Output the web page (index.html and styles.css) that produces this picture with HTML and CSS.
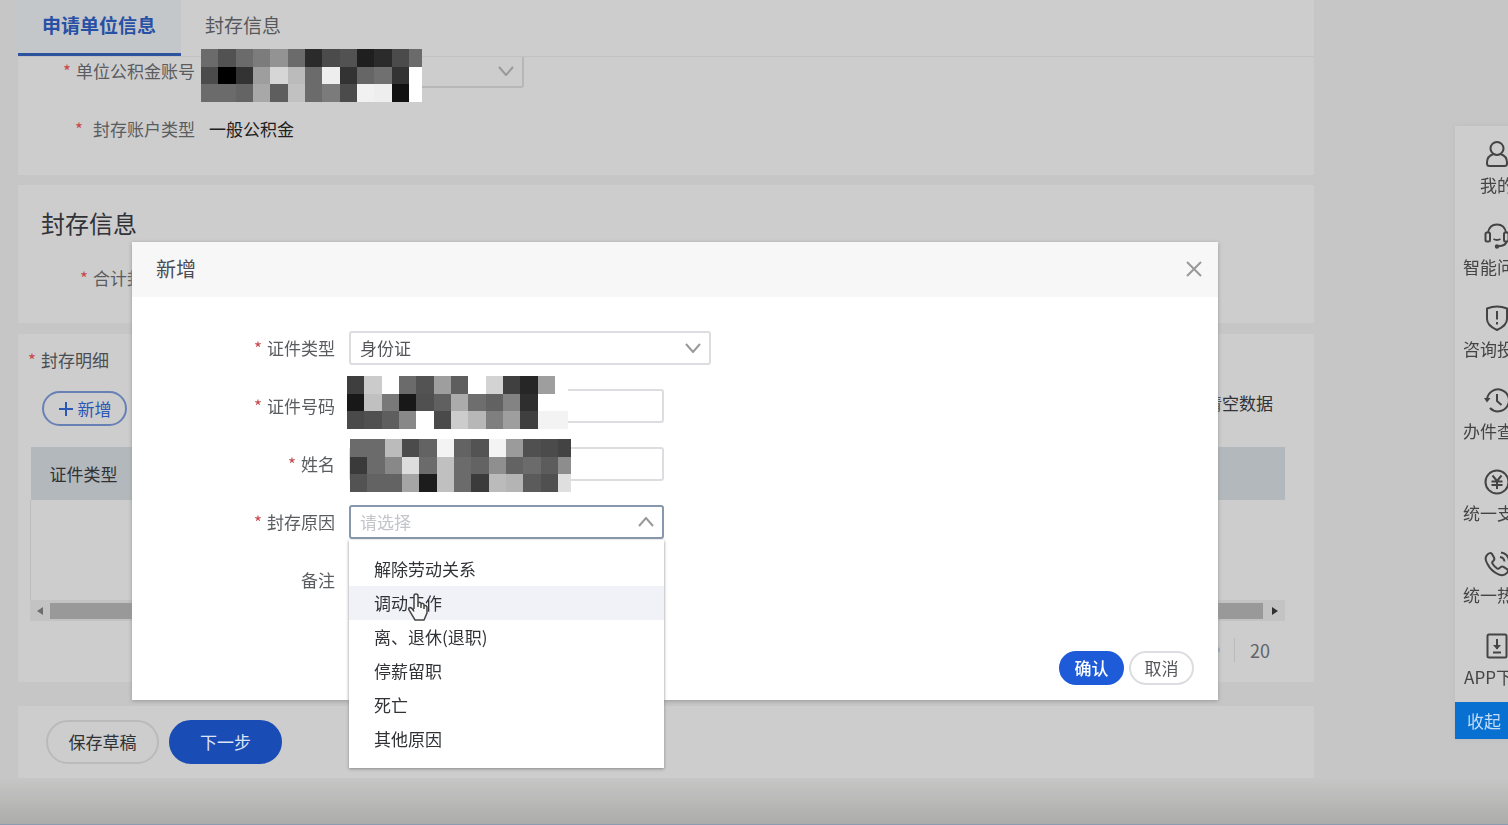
FILE: index.html
```html
<!DOCTYPE html>
<html lang="zh-CN">
<head>
<meta charset="utf-8">
<title>封存信息</title>
<link rel="stylesheet" href="styles.css">
</head>
<body>
<main class="page">
  <nav class="tabs">
    <a class="tab active" href="#unit">申请单位信息</a>
    <a class="tab" href="#seal">封存信息</a>
  </nav>
  <section class="panel unit" id="unit">
    <div class="row">
      <label class="label" for="account"><span class="star">*</span>单位公积金账号</label>
      <div class="field account">
        <select id="account" class="control"><option></option></select>
        <svg class="chevron" viewBox="0 0 16 10"><path d="M1 1l7 8 7-8"/></svg>
        <div class="mosaic" data-rows="6b526b7c936b2b4b521f2b4b6b 4b00339ed6bb6bee33667033ff 6b6b64a85ec16b7b4bf1ee12ff"></div>
      </div>
    </div>
    <div class="row">
      <span class="label wide"><span class="star">*</span>封存账户类型</span>
      <span class="value">一般公积金</span>
    </div>
  </section>
  <section class="panel seal" id="seal">
    <h2 class="heading">封存信息</h2>
    <div class="row"><span class="label"><span class="star">*</span>合计封存人数</span></div>
  </section>
  <section class="panel detail">
    <div class="detail-title"><span class="star">*</span>封存明细</div>
    <div class="toolbar">
      <button class="add" type="button"><svg viewBox="0 0 16 16"><path d="M8 1v14M1 8h14"/></svg>新增</button>
      <button class="clear" type="button">清空数据</button>
    </div>
    <table class="table">
      <thead><tr><th>证件类型</th></tr></thead>
      <tbody><tr><td></td></tr></tbody>
    </table>
    <div class="scrollbar">
      <svg viewBox="0 0 6 8"><path d="M6 0v8L0 4z"/></svg>
      <div class="thumb"></div>
      <svg class="dark" viewBox="0 0 6 8"><path d="M0 0v8l6-4z"/></svg>
    </div>
    <div class="pager"><span class="page-dot"></span><span class="page-size">20</span></div>
  </section>
  <footer class="panel actions">
    <button class="btn-large" type="button">保存草稿</button>
    <button class="btn-large next" type="button">下一步</button>
  </footer>
</main>
<div class="fade"></div>

<aside class="side">
  <a class="side-item" href="#my"><svg viewBox="0 0 26 26"><path d="M9.500 13C7 11 6.500 9.500 6.500 7.500a6.500 6.500 0 0 1 13 0c0 2-.5 3.500-3 5.500M9.500 13C5 14.500 3 17.500 3 21.500v1q0 2.500 2.500 2.500h15q2.500 0 2.500-2.500v-1c0-4-2-7-6.500-8.500M9.500 13q3.500 1.800 7 0"/></svg>我的</a>
  <a class="side-item" href="#ask"><svg viewBox="0 0 26 26"><rect x="1.500" y="9.500" width="4.500" height="9" rx="1.500"/><rect x="20" y="9.500" width="4.500" height="9" rx="1.500"/><path d="M4 9.500C5 4 8.500 1.500 13 1.500S21 4 22 9.500M22.500 18.500c-.5 3-4 4.500-8 4.800M9.500 16q3.500 2 7 0"/><circle cx="13" cy="23.500" r="2.200" class="solid"/></svg>智能问答</a>
  <a class="side-item" href="#complain"><svg viewBox="0 0 26 26"><path d="M3 3.500Q13-.5 23 3.500V14q0 6.500-10 11Q3 20.500 3 14z"/><path class="bold" d="M13 6v8.500M13 17v2.500"/></svg>咨询投诉</a>
  <a class="side-item" href="#progress"><svg viewBox="0 0 26 26"><path d="M3 12.500a11 11 0 1 1 3 8.500M13 7v7l4.500 4"/><path class="solid" d="M0 11h6.500L3 15.500z"/></svg>办件查询</a>
  <a class="side-item" href="#pay"><svg viewBox="0 0 26 26"><circle cx="13" cy="13" r="11.500"/><path class="bold" d="M8.500 6.500l4.500 5.500 4.500-5.500M7.500 12.500h11M7.500 16h11M13 12v8"/></svg>统一支付</a>
  <a class="side-item" href="#hotline"><svg viewBox="0 0 26 26"><path d="M3.500 3.500Q6 1 8 3l2 3.500q1 2-.8 3.500-1.700 1.200-.5 3 1.800 2.800 4.300 4.300 1.800 1 3-.6 1.500-1.800 3.500-.8l3.500 2.200q2 1.600 0 3.800-3.500 3.700-8.500 1.500Q7 20 3.500 13-.3 7 3.500 3.500zM16 6q4 .5 4.500 4.500M17 1.500q7 1 8 8"/></svg>统一热线</a>
  <a class="side-item" href="#app"><svg viewBox="0 0 26 26"><rect x="3.500" y="1.500" width="19" height="23" rx="1.500"/><path d="M13 6v10M9 19.500h8"/><path class="solid" d="M9 12h8l-4 4.500z"/></svg>APP下载</a>
  <button class="collapse" type="button">收起</button>
</aside>

<div class="modal" role="dialog" aria-labelledby="modal-title">
  <header class="modal-head">
    <h3 id="modal-title">新增</h3>
    <button class="close" type="button" aria-label="关闭"><svg viewBox="0 0 16 16"><path d="M1 1l14 14M15 1L1 15"/></svg></button>
  </header>
  <form class="form">
    <div class="row">
      <label class="label" for="idtype"><span class="star">*</span>证件类型</label>
      <div class="field long">
        <select id="idtype" class="control"><option>身份证</option></select>
        <svg class="chevron" viewBox="0 0 16 10"><path d="M1 1l7 8 7-8"/></svg>
      </div>
    </div>
    <div class="row">
      <label class="label" for="idno"><span class="star">*</span>证件号码</label>
      <div class="field">
        <input id="idno" class="control" type="text">
        <div class="mosaic idno" data-rows="3ecbff6b539e5effd340269eff 18c079185060ab6e62832effff 4a505e88ff4accb77f9e3ff3f3"></div>
      </div>
    </div>
    <div class="row">
      <label class="label" for="name"><span class="star">*</span>姓名</label>
      <div class="field">
        <input id="name" class="control" type="text">
        <div class="mosaic name" data-rows="6b6bbb4b63f36353f39b504b43 3a6b88dd6bc06b638f636b5c8d 536363a51cc06b3bbbb45b50df"></div>
      </div>
    </div>
    <div class="row">
      <label class="label" for="reason"><span class="star">*</span>封存原因</label>
      <div class="field">
        <select id="reason" class="control focused"><option>请选择</option></select>
        <svg class="chevron" viewBox="0 0 16 10"><path d="M1 9l7-8 7 8"/></svg>
        <ul class="options" role="listbox" aria-label="封存原因">
          <li role="option">解除劳动关系</li>
          <li role="option" class="hover">调动工作
            <svg class="pointer" viewBox="0 0 22 30"><path d="M7 17V4q0-2 2-2t2 2v7q1-1.500 3 0v1q2-1.500 3 .5v1q2.500-.5 3 1.500v6l-3 7H8L2 18q-1-2 1-2.500 2 0 4 4M11 11v4M14 12v4M17 13v4"/></svg>
          </li>
          <li role="option">离、退休(退职)</li>
          <li role="option">停薪留职</li>
          <li role="option">死亡</li>
          <li role="option">其他原因</li>
        </ul>
      </div>
    </div>
    <div class="row"><span class="label">备注</span></div>
  </form>
  <footer class="modal-foot">
    <button class="btn primary" type="button">确认</button>
    <button class="btn" type="button">取消</button>
  </footer>
</div>
<script src="script.js"></script>
</body>
</html>
```
FILE: script.js
```js
// Fills each privacy mask with grey cells; every two hex digits are one cell.
document.querySelectorAll(".mosaic").forEach(function (mask) {
  mask.dataset.rows.replace(/ /g, "").match(/../g).forEach(function (shade) {
    var cell = document.createElement("i");
    cell.style.background = "#" + shade + shade + shade;
    mask.appendChild(cell);
  });
});
```
FILE: styles.css
```css
* { box-sizing: border-box; }
body {
  margin: 0;
  height: 100vh;
  display: flex;
  flex-direction: column;
  overflow: hidden;
  background: #c6c6c6;
  color: #303236;
  font: 17px/24px "Noto Sans CJK SC", sans-serif;
}
button, input, select { font: inherit; color: inherit; margin: 0; }
button { cursor: pointer; padding: 0; }
a { color: inherit; text-decoration: none; }
h2, h3 { margin: 0; font-weight: 400; }
svg { fill: none; stroke: currentColor; flex: none; }

.page { margin: 0 194px 0 18px; }
.tabs {
  position: relative;
  z-index: 1;
  display: flex;
  height: 56px;
  background: #cdcdcd;
  box-shadow: 0 1px 1px #c2c2c2;
}
.tab { padding: 0 25px 0 24px; font-size: 19px; line-height: 50px; color: #56585c; }
.tab.active {
  background: #c4c7c9;
  border-bottom: 3px solid #2d539f;
  color: #2850a4;
  font-weight: 700;
}
.panel { background: #cdcdcd; }
.row { display: flex; align-items: center; height: 34px; }
.row + .row { margin-top: 24px; }
.label { width: 177px; margin-right: 14px; text-align: right; color: #5a5c60; white-space: nowrap; }
.star { margin-right: 5px; color: #c8484c; }
.wide .star { margin-right: 10px; }
.value { color: #202020; }
.unit { margin-top: -2px; padding-bottom: 29px; }
.seal { margin-top: 10px; padding: 24px 0 28px; }
.heading { margin: 0 0 24px 23px; font-size: 24px; line-height: 28px; }

.field { position: relative; width: 315px; }
.control {
  display: block;
  width: 100%;
  height: 34px;
  padding: 0 9px;
  border: 2px solid #dcdde0;
  border-radius: 3px;
  background: transparent;
  color: #55575b;
  outline: none;
  appearance: none;
}
.account .control { border-color: #b6b7b9; }
.focused { border-color: #8797ad; color: #c3c5ca; }
.chevron { position: absolute; right: 10px; top: 12px; width: 16px; height: 10px; color: #999; stroke-width: 2; pointer-events: none; }
.mosaic {
  position: absolute;
  z-index: 2;
  left: -8px;
  top: -5px;
  width: 221px;
  height: 53px;
  display: grid;
  grid-template-columns: repeat(12, 4fr) 3fr;
  grid-template-rows: repeat(3, 1fr);
}
.mosaic.idno { left: -2px; top: -13px; }
.mosaic.name { left: 1px; top: -8px; }

.detail { margin-top: 11px; padding: 14px 29px 20px 12px; }
.detail-title { margin-left: -2px; color: #4b4d51; }
.toolbar { display: flex; justify-content: space-between; align-items: flex-start; margin: 19px 12px 21px; }
.add {
  display: flex;
  align-items: center;
  justify-content: center;
  gap: 4px;
  width: 85px;
  height: 35px;
  border: 2px solid #6881b5;
  border-radius: 18px;
  background: transparent;
  color: #2b57b6;
}
.add svg { width: 16px; height: 16px; stroke-width: 2; }
.clear { border: 0; background: none; }
.table { width: 100%; border-collapse: collapse; }
.table th { height: 53px; padding: 0 19px; background: #b3b8bc; text-align: left; font-weight: 400; }
.table td { height: 100px; padding: 0; border-left: 1px solid #bcbcbc; }
.scrollbar { display: flex; align-items: center; gap: 9px; height: 21px; padding: 0 7px; background: #c3c3c3; }
.scrollbar svg { width: 6px; height: 8px; fill: #6e6e6e; stroke: none; }
.scrollbar .dark { fill: #303030; }
.thumb { flex: 1; height: 16px; margin-left: -2px; background: #999; }
.pager { display: flex; align-items: center; justify-content: flex-end; margin-top: 17px; padding-right: 15px; color: #626468; }
.page-dot { width: 6px; height: 6px; margin-right: 14px; border-radius: 50%; background: #9aa9c6; }
.page-size { padding-left: 15px; border-left: 1px solid #bababa; font-size: 18px; }

.actions { display: flex; gap: 10px; margin-top: 24px; padding: 14px 28px; }
.btn-large { width: 113px; height: 44px; border: 2px solid #b9babc; border-radius: 22px; background: transparent; }
.btn-large.next { border-color: #1a4cb5; background: #1a4cb5; color: #dce5f5; }
.fade { flex: 1; border-bottom: 1px solid #8d9bb0; background: linear-gradient(#c6c6c6, #acacaa); }

.side { position: fixed; right: -31px; top: 126px; width: 84px; background: #cdcdcd; box-shadow: 0 0 4px #bbb; color: #444; }
.side-item { display: flex; flex-direction: column; align-items: center; gap: 6px; height: 82px; padding-top: 15px; white-space: nowrap; }
.side-item svg { width: 26px; height: 26px; stroke-width: 2; stroke-linejoin: round; }
.side-item .solid { fill: currentColor; stroke: none; }
.side-item .bold { stroke-width: 2; }
.collapse { display: block; width: 100%; height: 37px; margin-top: 2px; padding-left: 12px; border: 0; background: #0870d1; color: #c4ddf5; text-align: left; }

.modal { position: fixed; z-index: 3; left: 132px; right: 290px; top: 242px; background: #fff; box-shadow: 0 1px 4px #999; }
.modal-head { display: flex; align-items: center; justify-content: space-between; height: 55px; padding: 0 16px 2px 24px; background: #f7f7f7; }
.modal-head h3 { font-size: 20px; color: #4a4c55; }
.close { display: flex; border: 0; background: none; color: #999; }
.close svg { width: 16px; height: 16px; stroke-width: 2; }
.form { padding: 34px 0 54px 26px; }
.field.long { width: 362px; }
.modal-foot { display: flex; justify-content: flex-end; gap: 5px; padding: 0 24px 15px; }
.btn { width: 65px; height: 34px; border: 2px solid #dcdde0; border-radius: 17px; background: #fff; color: #55575b; }
.btn.primary { border-color: #1e5bd8; background: #1e5bd8; color: #fff; font-weight: 500; }
.options {
  position: absolute;
  z-index: 3;
  left: 0;
  right: 0;
  top: 35px;
  margin: 0;
  padding: 12px 0;
  list-style: none;
  background: #fff;
  box-shadow: 0 1px 3px #888;
}
.options li { position: relative; padding: 0 25px; line-height: 34px; }
.options .hover { background: #f1f2f7; }
.pointer { position: absolute; left: 58px; top: 6px; width: 22px; height: 30px; fill: #f7f7fa; stroke: #444; stroke-width: 1.500; }
```
